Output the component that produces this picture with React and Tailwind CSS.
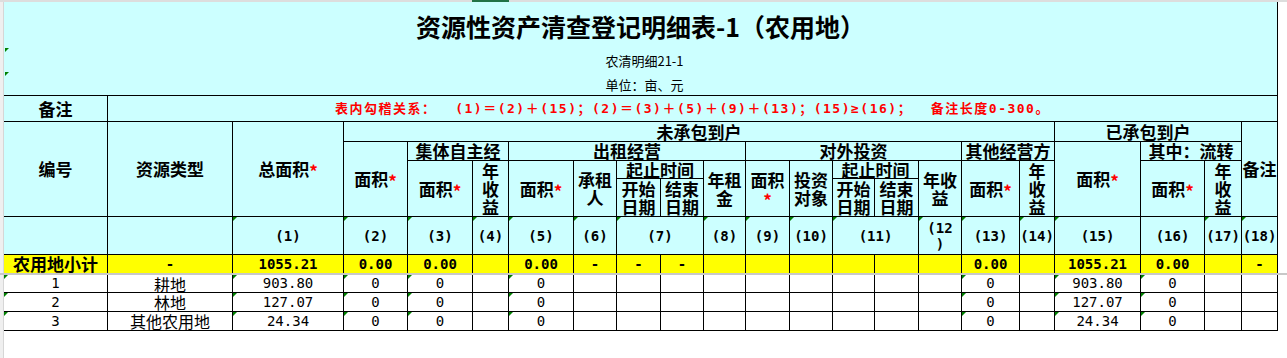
import clsx from "clsx";

// column widths match the sheet's gridlines (1px black gap between each)
const COLS = "grid-cols-[103px_124px_110px_63px_64px_35px_64px_42px_43px_42px_41px_43px_42px_41px_43px_42px_57px_34px_85px_63px_36px_35px]";
const H = "bg-[#ccffff] font-bold text-[17px] leading-[18px]";
const NUM = "font-['DejaVu_Sans_Mono','Noto_Sans_CJK_SC',monospace] text-[14px]";

function Cell({ className = "", tri = false, children }) {
    return (
        <div className={clsx("relative flex items-center justify-center text-center overflow-hidden whitespace-nowrap", className)}>
            {tri && <span className="absolute left-0 top-0 w-0 h-0 border-t-[4px] border-r-[4px] border-t-[#008000] border-r-transparent" />}
            {children}
        </div>
    );
}

const Star = () => <span className="text-[#ff0000] relative top-[2px]">*</span>;

const Gutter = ({ className = "" }) => <div className={clsx("w-[4px] shrink-0 bg-[#efefef] border-r border-[#d6d6d6]", className)} />;

const numbers = [
    { t: "", tri: false }, { t: "", tri: false },
    { t: "(1)", tri: true }, { t: "(2)", tri: true }, { t: "(3)", tri: true }, { t: "(4)", tri: true },
    { t: "(5)", tri: true }, { t: "(6)", tri: true }, { t: "(7)", tri: true, span: "col-span-2" },
    { t: "(8)", tri: true }, { t: "(9)", tri: true }, { t: "(10)", tri: true }, { t: "(11)", tri: true, span: "col-span-2" },
    { t: "(12)", tri: true }, { t: "(13)", tri: true }, { t: "(14)", tri: true }, { t: "(15)", tri: true },
    { t: "(16)", tri: false }, { t: "(17)", tri: true }, { t: "(18)", tri: true },
];

const subtotal = ["农用地小计", "-", "1055.21", "0.00", "0.00", "", "0.00", "-", "-", "-", "", "", "", "", "", "", "0.00", "", "1055.21", "0.00", "", "-"];

const rows = [
    ["1", "耕地", "903.80", "0", "0", "", "0", "", "", "", "", "", "", "", "", "", "0", "", "903.80", "0", "", ""],
    ["2", "林地", "127.07", "0", "0", "", "0", "", "", "", "", "", "", "", "", "", "0", "", "127.07", "0", "", ""],
    ["3", "其他农用地", "24.34", "0", "0", "", "0", "", "", "", "", "", "", "", "", "", "0", "", "24.34", "0", "", ""],
];
const triCols = [0, 2, 3, 4, 6, 16, 18, 19];

const isCjk = (s) => /[\u4e00-\u9fff]/.test(s);

export default function App() {
    return (
        <div className="w-[1287px] h-[358px] overflow-hidden bg-white flex flex-col font-['Noto_Sans_CJK_SC','Noto_Sans',sans-serif] text-black">
            {/* column header edge */}
            <div className="h-[2px] shrink-0 flex bg-[#dddddd]">
                <div className="w-[472px]" />
                <div className="w-[37px] bg-[#217346]" />
            </div>

            <div className="flex shrink-0">
                <Gutter />
                <div className={clsx("grid gap-px bg-black border-r border-black", COLS, "grid-rows-[93px_25px_19px_18px_17px_37px_37px_18px]")}>
                    {/* title block */}
                    <div className="relative col-span-22 bg-[#ccffff] flex flex-col items-center pt-[8px]">
                        <span className="absolute left-[1px] top-[46px] w-0 h-0 border-t-[4px] border-r-[4px] border-t-[#008000] border-r-transparent" />
                        <span className="absolute left-[1px] top-[70px] w-0 h-0 border-t-[4px] border-r-[4px] border-t-[#008000] border-r-transparent" />
                        <div className="text-[25px] font-bold leading-[32px]">资源性资产清查登记明细表-1（农用地）</div>
                        <div className="text-[13px] leading-[20px] mt-[9px] pl-[8px]">农清明细21-1</div>
                        <div className="text-[13px] leading-[20px] mt-[4px] pl-[8px]">单位：亩、元</div>
                    </div>

                    <Cell className={H}>备注</Cell>
                    <Cell className="col-span-21 bg-[#ccffff]">
                        <span className="whitespace-pre text-[#ff0000] font-bold text-[13px] tracking-[1.5px] font-['DejaVu_Sans_Mono','Noto_Sans_CJK_SC',monospace]">
                            表内勾稽关系：  (1)＝(2)＋(15)；(2)＝(3)＋(5)＋(9)＋(13)；(15)≥(16)；  备注长度0-300。
                        </span>
                    </Cell>

                    <Cell className={clsx(H, "row-span-4")}>编号</Cell>
                    <Cell className={clsx(H, "row-span-4")}>资源类型</Cell>
                    <Cell className={clsx(H, "row-span-4")}>总面积<Star /></Cell>
                    <Cell className={clsx(H, "col-span-15")}>未承包到户</Cell>
                    <Cell className={clsx(H, "col-span-3")}>已承包到户</Cell>
                    <Cell className={clsx(H, "row-span-4")}>备注</Cell>

                    <Cell className={clsx(H, "row-span-3")}>面积<Star /></Cell>
                    <Cell className={clsx(H, "col-span-2")}>集体自主经</Cell>
                    <Cell className={clsx(H, "col-span-5")}>出租经营</Cell>
                    <Cell className={clsx(H, "col-span-5")}>对外投资</Cell>
                    <Cell className={clsx(H, "col-span-2")}>其他经营方</Cell>
                    <Cell className={clsx(H, "row-span-3")}>面积<Star /></Cell>
                    <Cell className={clsx(H, "col-span-2")}>其中：流转</Cell>

                    <Cell className={clsx(H, "row-span-2")}>面积<Star /></Cell>
                    <Cell className={clsx(H, "row-span-2")}>年<br />收<br />益</Cell>
                    <Cell className={clsx(H, "row-span-2")}>面积<Star /></Cell>
                    <Cell className={clsx(H, "row-span-2")}>承租<br />人</Cell>
                    <Cell className={clsx(H, "col-span-2")}>起止时间</Cell>
                    <Cell className={clsx(H, "row-span-2")}>年租<br />金</Cell>
                    <Cell className={clsx(H, "row-span-2")}><span>面积<br /><Star /></span></Cell>
                    <Cell className={clsx(H, "row-span-2")}>投资<br />对象</Cell>
                    <Cell className={clsx(H, "col-span-2")}>起止时间</Cell>
                    <Cell className={clsx(H, "row-span-2")}>年收<br />益</Cell>
                    <Cell className={clsx(H, "row-span-2")}>面积<Star /></Cell>
                    <Cell className={clsx(H, "row-span-2")}>年<br />收<br />益</Cell>
                    <Cell className={clsx(H, "row-span-2")}>面积<Star /></Cell>
                    <Cell className={clsx(H, "row-span-2")}>年<br />收<br />益</Cell>

                    <Cell className={H}>开始<br />日期</Cell>
                    <Cell className={H}>结束<br />日期</Cell>
                    <Cell className={H}>开始<br />日期</Cell>
                    <Cell className={H}>结束<br />日期</Cell>

                    {numbers.map((n, i) => (
                        <Cell key={i} tri={n.tri} className={clsx("bg-[#ccffff] font-bold leading-[16px]", NUM, n.span)}>
                            {n.t === "(12)" ? <span>(12<br />)</span> : n.t}
                        </Cell>
                    ))}

                    {subtotal.map((v, i) => (
                        <Cell key={i} className={clsx("bg-[#ffff00] font-bold", isCjk(v) ? "text-[17px] leading-[18px]" : NUM)}>
                            {v}
                        </Cell>
                    ))}
                </div>
                <div className="flex-1" />
            </div>

            {/* frozen pane line */}
            <div className="h-[2px] shrink-0 bg-[#c8c8c8]" />

            <div className="flex shrink-0">
                <Gutter />
                <div className={clsx("grid gap-px bg-black border-r border-b border-black", COLS, "grid-rows-[17px_18px_18px]")}>
                    {rows.map((r, ri) =>
                        r.map((v, i) => (
                            <Cell key={ri + "-" + i} tri={triCols.includes(i)} className={clsx("bg-white", isCjk(v) ? "text-[16px] leading-[18px]" : NUM)}>
                                {v}
                            </Cell>
                        ))
                    )}
                </div>
                <div className="flex-1" />
            </div>

            <div className="flex flex-1">
                <Gutter />
                <div className="flex-1" />
            </div>
        </div>
    );
}
